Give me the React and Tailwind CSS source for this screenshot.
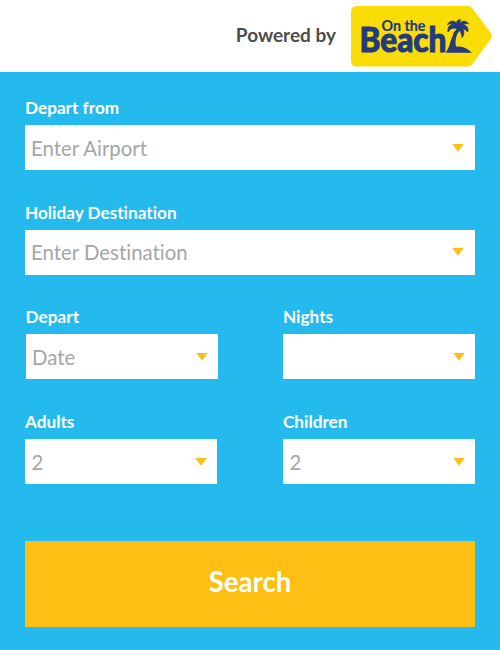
function Logo() {
    return (
        <svg width="141" height="61" viewBox="0 0 141 61" role="img" aria-label="On the Beach">
            <path
                d="M6 0H117.500Q119.500 0 121 2L139.500 26.500Q141.800 30 139.500 33.500L121 58.500Q119.500 60.500 117.500 60.500H6Q0 60.500 0 54.500V6Q0 0 6 0Z"
                fill="#fadc06"
            />
            <g fill="#243a7e" stroke="#243a7e">
                <text x="30.500" y="24.500" fontSize="16" strokeWidth="0.200" textLength="44" lengthAdjust="spacingAndGlyphs" className="font-[Lato,sans-serif] font-bold">
                    On the
                </text>
                <text x="8.500" y="46.300" fontSize="35" strokeWidth="1" textLength="87" lengthAdjust="spacingAndGlyphs" className="font-[Lato,sans-serif] font-black">
                    Beach
                </text>
                {/* trunk and island, with a yellow edge that cuts into the h */}
                <path
                    d="M94.500 46.800C97.500 43 98.500 39 99.700 35C101 31 103 27 106 22.500L109 24C106 28 104.800 31 104.600 35C104.500 38 104.500 39.500 105.500 40.800C111 39.500 116 42 121 46.800Z"
                    stroke="#fadc06"
                    strokeWidth="1.400"
                    paintOrder="stroke"
                />
                <path
                    d="M107 24C104 21 100 21.500 97 26C96.500 21.500 98.500 18.500 102 18.500C100.500 17.500 98.500 17.500 96.500 18.500C98.500 14.500 103 14 106 17.500C105.500 15 106.500 13.800 109.500 13.700C108.700 14.800 108.800 15.800 109.200 17C111.500 14.500 115.500 14.500 117.500 17.800C115 17.300 113.500 17.800 112.500 19C116 19.500 117.700 22.500 116.700 26C115 24 113.500 23 111.500 22.800C113.300 25 113.500 28.500 111 31.500C110.800 28.500 110 26 108.500 24.500C106.500 25 104.800 27 103 30C102 27 104 24.500 107 24Z"
                    strokeWidth="0.900"
                />
            </g>
        </svg>
    );
}

function Field({ label, value, half }) {
    return (
        <div>
            <div className="h-6 leading-6 text-[17.200px] font-bold text-white">{label}</div>
            <button
                type="button"
                aria-label={label}
                className={`mt-[5px] flex h-[45px] w-full items-center justify-between bg-white text-left text-[20.400px] text-[#a6a6a6] ${
                    half ? "pl-[6.500px] pr-2.5" : "pl-1.5 pr-[11px]"
                }`}
            >
                <span className="pt-px">{value}</span>
                <svg width="12" height="8" viewBox="0 0 12 8">
                    <path d="M0.300 0H11.700L6 7.800Z" fill="#fdbf14" />
                </svg>
            </button>
        </div>
    );
}

function App() {
    return (
        <div className="flex h-[650px] w-[500px] flex-col bg-[#24baee] font-[Lato,sans-serif] [font-variant-ligatures:none]">
            <header className="flex h-[72px] items-start justify-end bg-white pt-[6px] pr-2">
                <span className="mr-[15px] mt-[15px] text-[19px] leading-7 font-bold text-[#4d4d4d]">
                    Powered by
                </span>
                <Logo />
            </header>

            <form className="flex flex-col px-[25px] pt-6">
                <div className="flex flex-col gap-[30.500px]">
                    <Field label="Depart from" value="Enter Airport" />
                    <Field label="Holiday Destination" value="Enter Destination" />
                    <div className="flex flex-col gap-[31px]">
                        <div className="grid grid-cols-[192px_192px] justify-between pl-[0.600px]">
                            <Field half label="Depart" value="Date" />
                            <Field half label="Nights" value="" />
                        </div>
                        <div className="grid grid-cols-[192px_192px] justify-between">
                            <Field half label="Adults" value="2" />
                            <Field half label="Children" value="2" />
                        </div>
                    </div>
                </div>

                <button
                    type="button"
                    className="mt-[57px] h-[86px] bg-[#fdbf14] pb-1 text-[27.600px] font-bold text-white"
                >
                    Search
                </button>
            </form>
        </div>
    );
}

export default App;
